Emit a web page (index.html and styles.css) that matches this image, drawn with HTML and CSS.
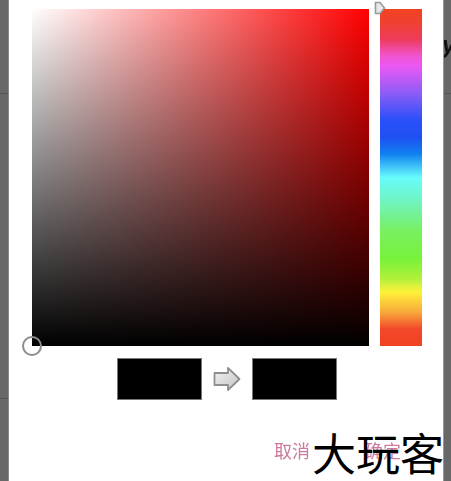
FILE: index.html
```html
<!DOCTYPE html>
<html lang="zh">
<head>
<meta charset="utf-8">
<title>颜色选择</title>
<link rel="stylesheet" href="styles.css">
</head>
<body>
<div class="screen">
  <div class="side side-left"><div class="rule rule-a"></div><div class="rule rule-b"></div></div>
  <main class="dialog">
    <div class="pickers">
      <div class="sv">
        <div class="sv-marker"></div>
      </div>
      <div class="hue">
        <svg class="hue-marker" viewBox="0 0 12 14" width="12" height="14"><path d="M1.5 1.5 L6 1.5 L10.5 7 L6 12.5 L1.5 12.5 Z" fill="#e8e8e8" stroke="#999" stroke-width="1.6"/></svg>
      </div>
    </div>
    <div class="compare">
      <div class="swatch"></div>
      <svg class="arrow" viewBox="0 0 28 26" width="28" height="26">
        <defs><linearGradient id="arrowFill" x1="0" y1="0" x2="1" y2="1"><stop offset="0" stop-color="#f2f2f2"/><stop offset="1" stop-color="#c4c4c4"/></linearGradient></defs>
        <path d="M1.5 7 H15 V1.8 L26.5 13 L15 24.2 V19 H1.5 Z" fill="url(#arrowFill)" stroke="#8e8e8e" stroke-width="1.8" stroke-linejoin="round"/>
      </svg>
      <div class="swatch"></div>
    </div>
    <div class="actions">
      <span class="action">取消</span>
      <span class="action">确定</span>
    </div>
  </main>
  <div class="side side-right"><span class="peek">y</span><div class="rule rule-c"></div></div>
</div>
<div class="watermark">大玩客</div>
</body>
</html>
```
FILE: styles.css
```css
* { box-sizing: border-box; }
html, body { margin: 0; padding: 0; }
body {
  width: 451px;
  height: 481px;
  overflow: hidden;
  background: #fff;
  font-family: "Noto Sans CJK SC", "Liberation Sans", sans-serif;
  position: relative;
}
.screen {
  display: flex;
  width: 451px;
  height: 481px;
  filter: blur(0.5px);
}
.side {
  background: #686868;
  position: relative;
  overflow: hidden;
}
.side-left { width: 9px; border-right: 1px solid #8a8a8a; }
.side-right { width: 8px; border-left: 1px solid #9a9a9a; }
.rule { position: absolute; left: 0; right: 0; height: 1px; background: #555; }
.rule-a { top: 93px; }
.rule-b { top: 398px; }
.rule-c { top: 93px; background: #575757; }
.peek {
  position: absolute;
  left: -2px;
  top: 30px;
  font: italic 700 24px/30px "Liberation Sans", sans-serif;
  color: #111;
}
.dialog {
  flex: 1;
  background: #fff;
  padding: 9px 20px 0 23px;
  display: flex;
  flex-direction: column;
}
.pickers {
  display: flex;
  gap: 11px;
  height: 337px;
}
.sv {
  width: 337px;
  height: 337px;
  position: relative;
  background:
    linear-gradient(to bottom, rgba(0,0,0,0), #000),
    linear-gradient(to right, #fff, #f00);
}
.sv-marker {
  position: absolute;
  left: -10px;
  bottom: -10px;
  width: 20px;
  height: 20px;
  border: 2px solid #8c8c8c;
  border-radius: 50%;
}
.hue {
  width: 42px;
  height: 337px;
  position: relative;
  background: linear-gradient(to bottom,
    #f24222 0%, #f04030 4%, #ee3c5c 9%, #f055d0 14%, #ea58f4 17%, #8c5cf6 25%,
    #2a50fa 33%, #1f50f2 38%, #1080f0 43%, #50d8fa 48%, #66fcfc 50%,
    #70f4c0 57%, #78f060 66%, #78f23a 74%, #b0f03a 80%, #fff23a 84%,
    #f8a83a 90%, #f2482a 95%, #f24222 100%);
}
.hue-marker {
  position: absolute;
  left: -6px;
  top: -8px;
}
.compare {
  display: flex;
  align-items: center;
  gap: 10px;
  margin: 12px 0 0 85px;
}
.swatch {
  width: 85px;
  height: 42px;
  background: #000;
  border: 1px solid #777;
}
.arrow { display: block; margin: 0 1px; }
.actions {
  display: flex;
  gap: 55px;
  margin: 37px 0 0 242px;
}
.action {
  font-size: 18px;
  line-height: 26px;
  color: #cc7a9e;
}
.watermark {
  position: absolute;
  left: 312px;
  top: 425px;
  font-size: 44px;
  line-height: 54px;
  white-space: nowrap;
  color: #000;
  font-weight: 400;
}
```
